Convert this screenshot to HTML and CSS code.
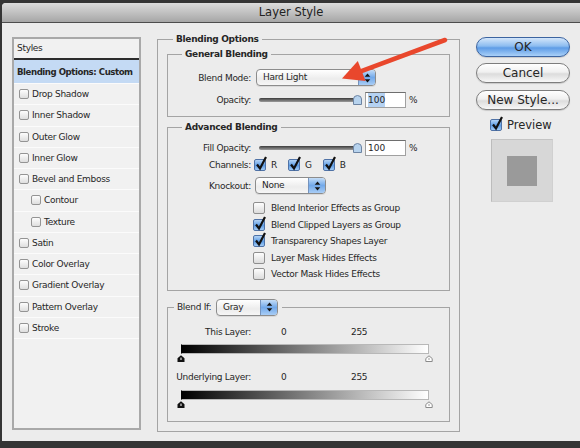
FILE: index.html
```html
<!DOCTYPE html>
<html lang="en">
<head>
    <meta charset="UTF-8">
    <title>Layer Style</title>
    <link rel="stylesheet" href="styles.css">
</head>
<body>
    <div class="window">
        <div class="titlebar">Layer Style</div>

        <div class="dialog">
            <!-- Left: effects list -->
            <div class="styles-list">
                <div class="styles-head">Styles</div>
                <div class="style-row sel">Blending Options: Custom</div>
                <div class="style-row"><span class="box"></span>Drop Shadow</div>
                <div class="style-row"><span class="box"></span>Inner Shadow</div>
                <div class="style-row"><span class="box"></span>Outer Glow</div>
                <div class="style-row"><span class="box"></span>Inner Glow</div>
                <div class="style-row"><span class="box"></span>Bevel and Emboss</div>
                <div class="style-row sub"><span class="box"></span>Contour</div>
                <div class="style-row sub"><span class="box"></span>Texture</div>
                <div class="style-row"><span class="box"></span>Satin</div>
                <div class="style-row"><span class="box"></span>Color Overlay</div>
                <div class="style-row"><span class="box"></span>Gradient Overlay</div>
                <div class="style-row"><span class="box"></span>Pattern Overlay</div>
                <div class="style-row"><span class="box"></span>Stroke</div>
            </div>

            <!-- Middle: blending options -->
            <fieldset class="group outer">
                <legend>Blending Options</legend>

                <fieldset class="group general">
                    <legend>General Blending</legend>
                    <div class="row">
                        <span class="lbl">Blend Mode:</span>
                        <div class="popup mode">
                            <span class="val">Hard Light</span>
                            <span class="stepper"><svg width="7" height="10" viewBox="0 0 7 10"><path d="M3.5 0.5 L6.3 3.8 H0.7 Z M0.7 6.2 H6.3 L3.5 9.5 Z" fill="#151515"/></svg></span>
                        </div>
                    </div>
                    <div class="row gap6">
                        <span class="lbl">Opacity:</span>
                        <div class="slider"><span class="track"></span><svg class="knob" width="9" height="10" viewBox="0 0 9 10"><path d="M0.5 9.5 V4 Q0.5 0.8 4.5 0.5 Q8.5 0.8 8.5 4 V9.5 Z" fill="#b7d3ee" stroke="#6d84a2"/></svg></div>
                        <span class="num"><span class="hl">100</span></span>
                        <span class="pct">%</span>
                    </div>
                </fieldset>

                <fieldset class="group advanced">
                    <legend>Advanced Blending</legend>
                    <div class="row">
                        <span class="lbl">Fill Opacity:</span>
                        <div class="slider"><span class="track"></span><svg class="knob" width="9" height="10" viewBox="0 0 9 10"><path d="M0.5 9.5 V4 Q0.5 0.8 4.5 0.5 Q8.5 0.8 8.5 4 V9.5 Z" fill="#b7d3ee" stroke="#6d84a2"/></svg></div>
                        <span class="num">100</span>
                        <span class="pct">%</span>
                    </div>
                    <div class="row channels">
                        <span class="lbl">Channels:</span>
                        <span class="chan"><span class="cb on"><svg viewBox="0 0 12 15"><path d="M2 8.5 L5 12.5 L11 1" fill="none" stroke="#111" stroke-width="2.2"/></svg></span>R</span>
                        <span class="chan"><span class="cb on"><svg viewBox="0 0 12 15"><path d="M2 8.5 L5 12.5 L11 1" fill="none" stroke="#111" stroke-width="2.2"/></svg></span>G</span>
                        <span class="chan"><span class="cb on"><svg viewBox="0 0 12 15"><path d="M2 8.5 L5 12.5 L11 1" fill="none" stroke="#111" stroke-width="2.2"/></svg></span>B</span>
                    </div>
                    <div class="row knock">
                        <span class="lbl">Knockout:</span>
                        <div class="popup ko">
                            <span class="val">None</span>
                            <span class="stepper"><svg width="7" height="10" viewBox="0 0 7 10"><path d="M3.5 0.5 L6.3 3.8 H0.7 Z M0.7 6.2 H6.3 L3.5 9.5 Z" fill="#151515"/></svg></span>
                        </div>
                    </div>
                    <div class="checks">
                        <div class="check-row"><span class="cb"></span>Blend Interior Effects as Group</div>
                        <div class="check-row"><span class="cb on"><svg viewBox="0 0 12 15"><path d="M2 8.5 L5 12.5 L11 1" fill="none" stroke="#111" stroke-width="2.2"/></svg></span>Blend Clipped Layers as Group</div>
                        <div class="check-row"><span class="cb on"><svg viewBox="0 0 12 15"><path d="M2 8.5 L5 12.5 L11 1" fill="none" stroke="#111" stroke-width="2.2"/></svg></span>Transparency Shapes Layer</div>
                        <div class="check-row"><span class="cb"></span>Layer Mask Hides Effects</div>
                        <div class="check-row"><span class="cb"></span>Vector Mask Hides Effects</div>
                    </div>
                </fieldset>

                <fieldset class="group blendif">
                    <legend>
                        <div class="legend-inner">
                            <span class="bi-lbl">Blend If:</span>
                            <div class="popup gray">
                                <span class="val">Gray</span>
                                <span class="stepper"><svg width="7" height="10" viewBox="0 0 7 10"><path d="M3.5 0.5 L6.3 3.8 H0.7 Z M0.7 6.2 H6.3 L3.5 9.5 Z" fill="#151515"/></svg></span>
                            </div>
                        </div>
                    </legend>
                    <div class="row layer-row">
                        <span class="lbl">This Layer:</span>
                        <span class="lo">0</span>
                        <span>255</span>
                    </div>
                    <div class="ramp"></div>
                    <div class="thumbs">
                        <svg width="8" height="7" viewBox="0 0 8 7"><path d="M4 0.3 L7.5 3.3 V7 H0.5 V3.3 Z" fill="#111"/><rect x="3.5" y="2.6" width="1" height="2.4" fill="#fff"/></svg>
                        <svg width="8" height="7" viewBox="0 0 8 7"><path d="M4 0.8 L7.2 3.5 V6.5 H0.8 V3.5 Z" fill="#fff" stroke="#8a8a8a"/><rect x="3.5" y="2.8" width="1" height="2.2" fill="#9a9a9a"/></svg>
                    </div>
                    <div class="row layer-row under">
                        <span class="lbl">Underlying Layer:</span>
                        <span class="lo">0</span>
                        <span>255</span>
                    </div>
                    <div class="ramp"></div>
                    <div class="thumbs">
                        <svg width="8" height="7" viewBox="0 0 8 7"><path d="M4 0.3 L7.5 3.3 V7 H0.5 V3.3 Z" fill="#111"/><rect x="3.5" y="2.6" width="1" height="2.4" fill="#fff"/></svg>
                        <svg width="8" height="7" viewBox="0 0 8 7"><path d="M4 0.8 L7.2 3.5 V6.5 H0.8 V3.5 Z" fill="#fff" stroke="#8a8a8a"/><rect x="3.5" y="2.8" width="1" height="2.2" fill="#9a9a9a"/></svg>
                    </div>
                </fieldset>
            </fieldset>

            <!-- Right: buttons and preview -->
            <div class="actions">
                <div class="btn default">OK</div>
                <div class="btn">Cancel</div>
                <div class="btn new">New Style...</div>
                <div class="preview-row">
                    <span class="cb on"><svg viewBox="0 0 12 15"><path d="M2 8.5 L5 12.5 L11 1" fill="none" stroke="#111" stroke-width="2.2"/></svg></span>
                    Preview
                </div>
                <div class="swatch"><div class="swatch-inner"></div></div>
            </div>
        </div>
    </div>

    <!-- red annotation arrow drawn over the dialog -->
    <svg class="arrow" width="120" height="55" viewBox="0 0 120 55">
        <line x1="115" y1="5" x2="30" y2="36.6" stroke="#e9472c" stroke-width="4.6" stroke-linecap="round"/>
        <polygon points="12,43.5 27.8,26 35.6,46" fill="#e9472c"/>
    </svg>
</body>
</html>
```

FILE: styles.css
```css
* {
    box-sizing: border-box;
}
body {
    margin: 0;
    height: 448px;
    overflow: hidden;
    position: relative;
    background: #353535;
    font-family: "DejaVu Sans", sans-serif;
    font-size: 9px;
    letter-spacing: -0.3px;
    color: #262626;
}
.window {
    margin: 3px 0 0 2px;
    width: 578px;
    height: 438px;
    background: #ececec;
    border-radius: 4px 0 0 0;
    overflow: hidden;
}
.titlebar {
    height: 20px;
    line-height: 19px;
    text-align: center;
    font-size: 11.5px;
    letter-spacing: 0;
    color: #222;
    background: linear-gradient(#dcdcdc, #a6a6a6);
    border-bottom: 1px solid #4d4d4d;
}
.dialog {
    display: flex;
    align-items: flex-start;
    padding: 10px 0 0 10px;
}

/* styles list */
.styles-list {
    width: 129px;
    height: 393px;
    margin-top: 4px;
    border: 2px solid #a9a9a9;
    background: #f1f1f1;
    flex: none;
}
.styles-head {
    height: 21px;
    line-height: 18px;
    padding-left: 3px;
    border-bottom: 2px solid #2c2c2c;
}
.style-row {
    display: flex;
    align-items: center;
    gap: 3px;
    height: 21.25px;
    padding-left: 5px;
    border-bottom: 1px solid #fbfbfb;
    white-space: nowrap;
}
.style-row.sel {
    height: 24px;
    padding-left: 3px;
    background: #c4daf4;
    font-size: 8.6px;
    font-weight: bold;
    letter-spacing: -0.45px;
}
.style-row.sub {
    padding-left: 17px;
}
.box {
    width: 10px;
    height: 10px;
    border: 1px solid #949494;
    border-radius: 2px;
    background: linear-gradient(#fdfdfd, #dedede);
    flex: none;
}

/* group boxes */
fieldset {
    margin: 0;
    padding: 0;
    min-width: 0;
    border: 1px solid #a4a4a4;
}
legend {
    padding: 0 3px;
    font-weight: bold;
    line-height: 12px;
}
.outer {
    width: 303px;
    margin-left: 16px;
    padding: 3px 9px 9px;
    flex: none;
}
.outer > legend {
    margin-left: 6px;
}
.general {
    padding: 9px 0 8px;
}
.general > legend,
.advanced > legend {
    margin-left: 14px;
}
.advanced {
    margin-top: 4px;
    padding: 7px 0 7px;
}
.blendif {
    margin-top: 8px;
    padding: 10.5px 0 13px;
}
.blendif > legend {
    margin-left: 6px;
    padding: 0 4px 0 3px;
    font-weight: normal;
    line-height: 17px;
}
.legend-inner {
    display: flex;
    align-items: center;
}
.bi-lbl {
    width: 39px;
}

.row {
    display: flex;
    align-items: center;
    white-space: nowrap;
}
.gap6 {
    margin-top: 6px;
}
.lbl {
    width: 83px;
    margin-right: 5px;
    text-align: right;
    flex: none;
}

/* popup menus */
.popup {
    display: flex;
    height: 17px;
    border: 1px solid #8c8c8c;
    border-radius: 4px;
    background: linear-gradient(#ffffff, #ececec 60%, #f6f6f6);
    overflow: hidden;
    box-shadow: 0 1px 0 rgba(0, 0, 0, 0.08);
}
.popup .val {
    flex: 1;
    padding-left: 6px;
    line-height: 15px;
}
.popup .stepper {
    width: 17px;
    display: flex;
    align-items: center;
    justify-content: center;
    border-left: 1px solid #7593bd;
    background: linear-gradient(#c4ddf7, #72a9ea 50%, #a9cdf5);
}
.mode {
    width: 120px;
}
.ko {
    width: 71px;
    margin-left: -1px;
}
.gray {
    width: 62px;
}

/* sliders & fields */
.slider {
    display: flex;
    align-items: center;
    width: 109px;
    padding: 0 3px;
}
.track {
    flex: 1;
    height: 4px;
    border-radius: 2px;
    background: linear-gradient(#3c3c3c, #9c9c9c);
}
.knob {
    margin-left: -2px;
    flex: none;
}
.num {
    width: 41px;
    height: 16px;
    padding-left: 2px;
    line-height: 14px;
    border: 1px solid #a0a0a0;
    border-top-color: #6e6e6e;
    background: #fff;
    letter-spacing: 0;
}
.hl {
    display: inline-block;
    background: #b5d2f2;
}
.pct {
    margin-left: 3px;
}

/* checkboxes */
.cb {
    position: relative;
    width: 12px;
    height: 12px;
    border: 1px solid #8e8e8e;
    border-radius: 2px;
    background: linear-gradient(#fdfdfd, #dcdcdc);
    flex: none;
}
.cb.on {
    border-color: #4f72a6;
    background: linear-gradient(#b3d3f5, #5d9ce4 55%, #a2cbf6);
}
.cb svg {
    position: absolute;
    left: 0;
    top: -4px;
    width: 12px;
    height: 15px;
}
.channels {
    height: 14px;
    margin-top: 2px;
}
.channels .lbl {
    margin-right: 3px;
}
.chan {
    display: flex;
    align-items: center;
    gap: 5px;
    margin-right: 11px;
}
.knock {
    margin-top: 5px;
}
.checks {
    margin-top: 6px;
    padding-left: 85px;
}
.check-row {
    display: flex;
    align-items: center;
    gap: 6px;
    height: 16.5px;
    white-space: nowrap;
}

/* blend if ramps */
.layer-row {
    height: 12px;
}
.layer-row.under {
    margin-top: 9px;
}
.lo {
    width: 70px;
    margin-left: 25px;
}
.ramp {
    width: 248px;
    height: 10px;
    margin: 6px 0 0 13px;
    border: 1px solid #b8b8b8;
    border-left-color: #000;
    background: linear-gradient(90deg, #000, #fff);
}
.under + .ramp {
    margin-top: 7px;
}
.thumbs {
    display: flex;
    justify-content: space-between;
    width: 256px;
    height: 7px;
    margin: 1px 0 0 9px;
}

/* right column */
.actions {
    width: 94px;
    margin: 4px 0 0 16px;
    display: flex;
    flex-direction: column;
    flex: none;
}
.btn {
    height: 20px;
    line-height: 18px;
    text-align: center;
    font-size: 12px;
    letter-spacing: 0;
    border: 1px solid #7d7d7d;
    border-radius: 10px;
    background: linear-gradient(#ffffff, #f0f0f0 45%, #dcdcdc 55%, #f7f7f7);
    box-shadow: 0 1px 1px rgba(0, 0, 0, 0.15);
}
.btn + .btn {
    margin-top: 6px;
}
.btn.new {
    margin-top: 7px;
}
.btn.default {
    border-color: #3c64a0;
    background: linear-gradient(#d4e6fa, #8cbcf0 45%, #5e9ce6 55%, #a9d0f8);
}
.preview-row {
    display: flex;
    align-items: center;
    gap: 5px;
    height: 13px;
    margin: 8px 0 0 14px;
    font-size: 11.5px;
    letter-spacing: 0;
}
.swatch {
    width: 62px;
    height: 63px;
    margin: 8px 0 0 15px;
    padding: 16px 0 0 15px;
    background: #d7d7d7;
    border: 1px solid #d0d0d0;
    border-left-color: #bcbcbc;
    border-top-color: #c4c4c4;
}
.swatch-inner {
    width: 30px;
    height: 30px;
    background: #9a9a9a;
}

/* annotation */
.arrow {
    position: absolute;
    left: 330px;
    top: 35px;
}
```
